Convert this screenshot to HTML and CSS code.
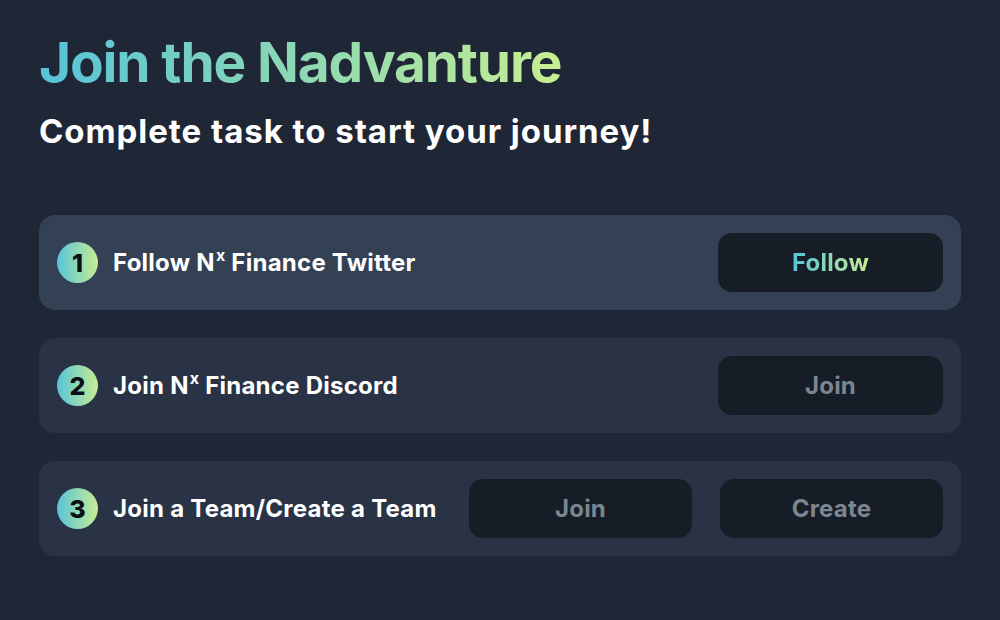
FILE: index.html
```html
<!DOCTYPE html>
<html>
<head>
<meta charset="utf-8">
<link rel="stylesheet" href="styles.css">
</head>
<body>
<main class="page">
  <h1 class="title">Join the Nadvanture</h1>
  <h2 class="subtitle">Complete task to start your journey!</h2>
  <div class="tasks">
    <div class="task task-active">
      <span class="num">1</span>
      <span class="label">Follow N<sup>x</sup> Finance Twitter</span>
      <button class="btn btn-active"><span class="grad-text">Follow</span></button>
    </div>
    <div class="task">
      <span class="num">2</span>
      <span class="label">Join N<sup>x</sup> Finance Discord</span>
      <button class="btn">Join</button>
    </div>
    <div class="task">
      <span class="num">3</span>
      <span class="label">Join a Team/Create a Team</span>
      <div class="btn-group">
        <button class="btn">Join</button>
        <button class="btn">Create</button>
      </div>
    </div>
  </div>
</main>
</body>
</html>
```
FILE: styles.css
```css
* { box-sizing: border-box; }
html, body {
  margin: 0;
  padding: 0;
  background: #1f2736;
  font-family: Inter, "Noto Sans", sans-serif;
  color: #fff;
}
.page {
  padding: 29px 39px 0 39px;
  width: 1000px;
  height: 620px;
}
.title {
  margin: 0;
  font-size: 55px;
  font-weight: 700;
  line-height: 67px;
  letter-spacing: -1.15px;
  background: linear-gradient(90deg, #56c3d9 0%, #8dd8b4 50%, #c7ee92 100%);
  -webkit-background-clip: text;
  background-clip: text;
  color: transparent;
  display: inline-block;
}
.subtitle {
  margin: 15px 0 0 0;
  font-size: 33px;
  font-weight: 700;
  line-height: 40px;
  letter-spacing: 0.95px;
}
.tasks {
  margin-top: 64px;
  display: flex;
  flex-direction: column;
  gap: 28px;
}
.task {
  display: flex;
  align-items: center;
  height: 95px;
  padding: 0 18px;
  border-radius: 16px;
  background: #293345;
}
.task-active { background: #344054; }
.num {
  width: 41px;
  height: 41px;
  border-radius: 50%;
  background: linear-gradient(90deg, #58c4da, #c6ec92);
  color: #0b0f16;
  font-size: 25px;
  font-weight: 800;
  display: flex;
  align-items: center;
  justify-content: center;
  flex: none;
}
.label {
  margin-left: 15px;
  font-size: 24px;
  font-weight: 700;
  flex: 1;
  letter-spacing: 0.25px;
}
.label sup {
  font-size: 16px;
  vertical-align: 0;
  position: relative;
  top: -10px;
  margin-left: 1px;
}
.btn-group {
  display: flex;
  gap: 28px;
}
.btn {
  width: 225px;
  height: 59px;
  border: none;
  border-radius: 14px;
  background: #171d27;
  color: #7c8690;
  font-family: Inter, "Noto Sans", sans-serif;
  font-size: 24px;
  font-weight: 700;
  letter-spacing: 0.2px;
  cursor: pointer;
}
.btn-group .btn { width: 223px; }
.grad-text {
  background: linear-gradient(90deg, #56c3d9, #c7ee92);
  -webkit-background-clip: text;
  background-clip: text;
  color: transparent;
}
```
